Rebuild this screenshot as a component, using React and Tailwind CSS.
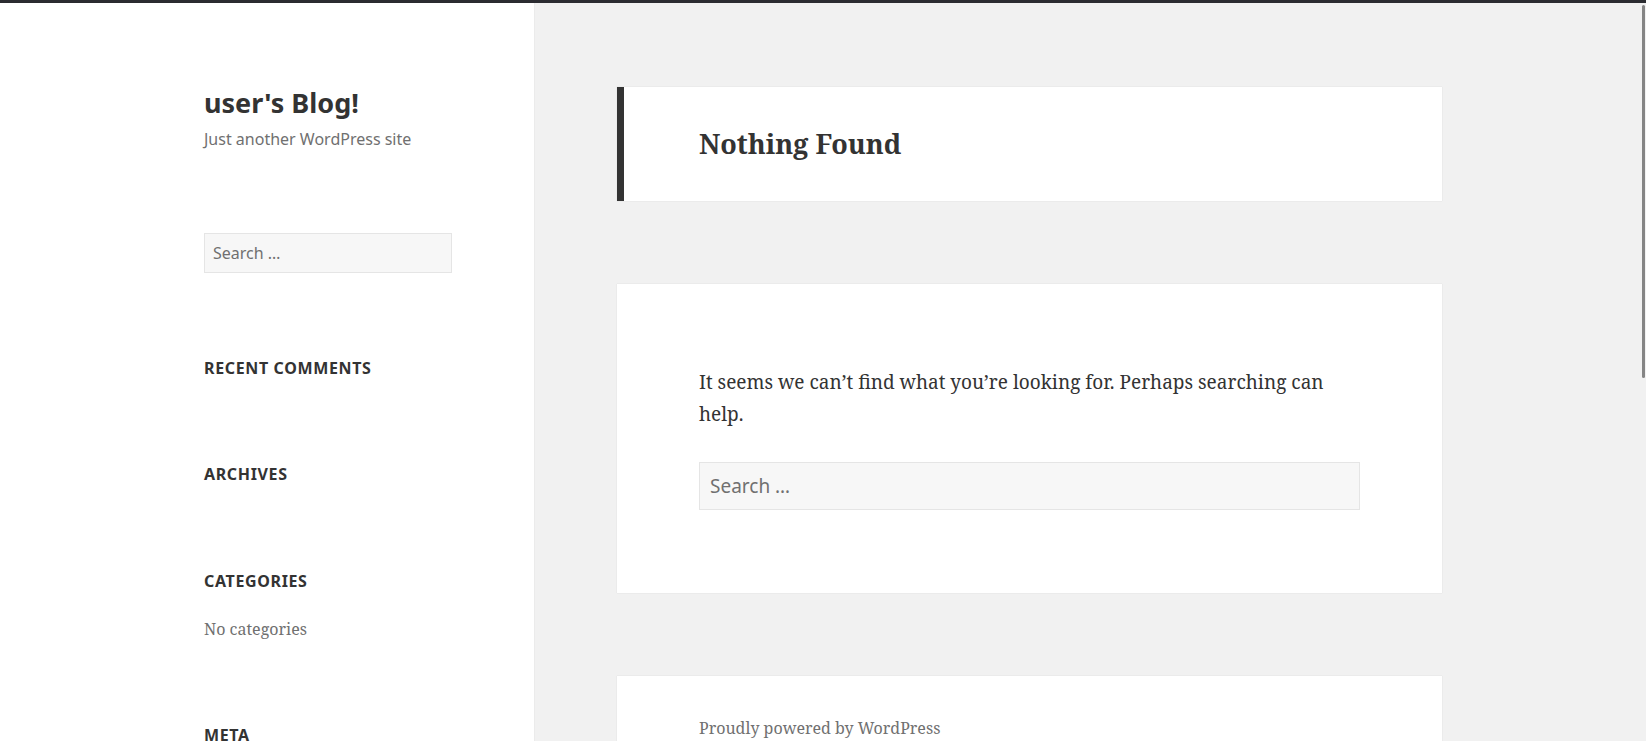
import React from 'react';

const sans = "font-['Noto_Sans','Open_Sans',sans-serif]";
const serif = "font-['Noto_Serif','DejaVu_Serif',serif]";

function WidgetTitle({ children, className = '' }) {
  return (
    <h2 className={`${sans} font-bold uppercase text-[16px] leading-[24px] tracking-[0.04em] text-[#333] ${className}`}>
      {children}
    </h2>
  );
}

export default function App() {
  return (
    <div className="h-[741px] overflow-hidden bg-[#f1f1f1] flex flex-col relative">
      {/* barre du haut */}
      <div className="h-[3px] bg-[#2b2c31] shrink-0"></div>

      <div className="flex flex-1">
        {/* Sidebar */}
        <aside className="w-[534px] shrink-0 bg-white shadow-[0_0_1px_rgba(0,0,0,0.15)] relative z-10 pt-[86px]">
          <div className="ml-[204px] w-[248px] flex flex-col">
            <h1 className={`${sans} font-bold text-[27px] leading-[28px] text-[#333]`}>user's Blog!</h1>
            <p className={`${sans} mt-[10px] text-[16px] leading-[24px] text-[#707070]`}>Just another WordPress site</p>

            <input
              type="search"
              placeholder="Search …"
              className={`${sans} mt-[82px] h-[40px] w-full px-[8px] text-[16px] bg-[#f7f7f7] border border-[#e5e5e5] text-[#707070] placeholder:text-[#707070] focus:outline-none`}
            />

            <WidgetTitle className="mt-[83px]">Recent Comments</WidgetTitle>
            <WidgetTitle className="mt-[82px]">Archives</WidgetTitle>
            <WidgetTitle className="mt-[83px]">Categories</WidgetTitle>
            <p className={`${serif} mt-[24px] text-[16px] leading-[24px] text-[#707070]`}>No categories</p>
            <WidgetTitle className="mt-[82px]">Meta</WidgetTitle>
          </div>
        </aside>

        {/* Contenu */}
        <main className="flex-1 pt-[84px] pl-[83px]">
          <div className="w-[825px] flex flex-col gap-[83px]">
            <header className="bg-white border-l-[7px] border-[#333] shadow-[0_0_1px_rgba(0,0,0,0.15)] pl-[75px] py-[37px]">
              <h1 className={`${serif} font-bold text-[27px] leading-[40px] text-[#333]`}>Nothing Found</h1>
            </header>

            <section className="bg-white shadow-[0_0_1px_rgba(0,0,0,0.15)] px-[82px] pt-[82px] pb-[83px]">
              <p className={`${serif} text-[19px] leading-[32px] text-[#333]`}>
                It seems we can’t find what you’re looking for. Perhaps searching can help.
              </p>
              <input
                type="search"
                placeholder="Search …"
                className={`${sans} mt-[32px] h-[48px] w-full px-[10px] text-[19px] bg-[#f7f7f7] border border-[#e5e5e5] text-[#707070] placeholder:text-[#707070] focus:outline-none`}
              />
            </section>

            <footer className="bg-white shadow-[0_0_1px_rgba(0,0,0,0.15)] px-[82px] pt-[40px] pb-[40px]">
              <p className={`${serif} text-[16px] leading-[24px] text-[#707070]`}>Proudly powered by WordPress</p>
            </footer>
          </div>
        </main>
      </div>

      {/* barre de défilement */}
      <div className="absolute right-[1px] top-[5px] w-[3px] h-[373px] rounded-full bg-[#858585]"></div>
    </div>
  );
}
